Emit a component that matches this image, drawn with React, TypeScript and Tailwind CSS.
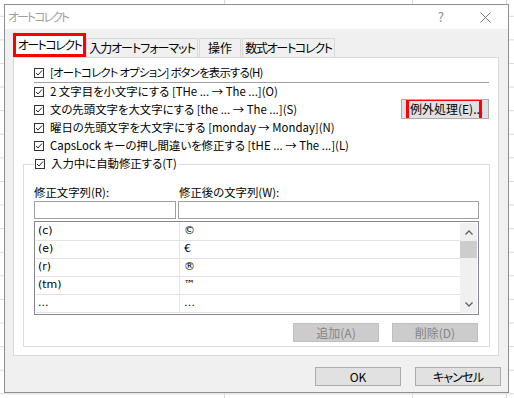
import React from "react";

const Check = () => (
  <span className="w-[10px] h-[10px] border border-[#333] bg-white flex items-center justify-center shrink-0">
    <svg width="8" height="8" viewBox="0 0 8 8">
      <polyline points="1,4 3,6 7,1.5" fill="none" stroke="#222" strokeWidth="1" />
    </svg>
  </span>
);

const Row = ({ text, cls = "" }: { text: string; cls?: string }) => (
  <div className="h-[18px] flex items-center gap-[6px]">
    <Check />
    <span className={"whitespace-nowrap " + cls}>{text}</span>
  </div>
);

const listRows: [string, string][] = [
  ["(c)", "©"],
  ["(e)", "€"],
  ["(r)", "®"],
  ["(tm)", "™"],
  ["...", "…"],
];

export default function App() {
  return (
    <div className="w-[514px] h-[398px] overflow-hidden bg-white bg-[linear-gradient(to_right,#dadada_1px,transparent_1px),linear-gradient(to_bottom,#dadada_1px,transparent_1px)] bg-[size:94px_23.6px] bg-[position:36px_15.8px] pl-[4px] pt-[4px] font-['Noto_Sans_CJK_JP',sans-serif] text-[11.4px] text-black [font-feature-settings:'palt']">
      <div className="w-[505px] h-[389px] border border-[#8f8f8f] bg-[#f0f0f0] flex flex-col">
        {/* title bar */}
        <div className="h-[24px] bg-white flex items-center pl-[3px] shrink-0">
          <span className="text-[#a0a0a0] text-[12px] tracking-[-2px]">オートコレクト</span>
          <span className="ml-auto mr-[36px] text-[#8a8a8a] text-[13px]">?</span>
          <svg width="11" height="11" viewBox="0 0 11 11" className="mr-[17px]">
            <path d="M0.5 0.5 L10.5 10.5 M10.5 0.5 L0.5 10.5" stroke="#777" strokeWidth="1" />
          </svg>
        </div>

        {/* tabs */}
        <div className="mt-[4px] ml-[8px] flex items-end h-[24px] whitespace-nowrap text-[12px]">
          <div className="w-[73px] h-[24px] border-[3px] border-[#ff0000] bg-white flex items-center justify-center tracking-[-1.5px]">
            オートコレクト
          </div>
          <div className="w-[112px] h-[19px] border border-b-0 border-[#d9d9d9] flex items-center justify-center tracking-[-1px]">
            入力オートフォーマット
          </div>
          <div className="ml-[1px] w-[42px] h-[19px] border border-b-0 border-[#d9d9d9] flex items-center justify-center">
            操作
          </div>
          <div className="ml-[1px] w-[93px] h-[19px] border border-b-0 border-[#d9d9d9] flex items-center justify-center tracking-[-1.3px]">
            数式オートコレクト
          </div>
        </div>

        {/* panel */}
        <div className="ml-[8px] w-[486px] h-[299px] border border-[#d9d9d9] bg-white flex flex-col shrink-0">
          <div className="mt-[6px] ml-[20px]">
            <Row text="[オートコレクト オプション] ボタンを表示する(H)" cls="tracking-[-0.8px]" />
          </div>
          <div className="ml-[20px] w-[455px] h-px bg-[#a0a0a0]" />
          <div className="flex">
            <div className="ml-[20px] flex flex-col">
              <Row text="2 文字目を小文字にする [THe ... → The ...](O)" />
              <Row text="文の先頭文字を大文字にする [the ... → The ...](S)" />
              <Row text="曜日の先頭文字を大文字にする [monday → Monday](N)" />
              <Row text="CapsLock キーの押し間違いを修正する [tHE ... → The ...](L)" />
            </div>
            <div className="ml-auto mr-[9px] mt-[16px] w-[88px] h-[20px] bg-[#e1e1e1] border border-[#adadad] relative flex items-center pl-[8px] overflow-hidden text-[12px]">
              <span className="whitespace-nowrap">例外処理(E)...</span>
              <div className="absolute left-[4px] top-[-2px] w-[76px] h-[23px] border-[3px] border-[#ff0000]" />
            </div>
          </div>

          <fieldset className="ml-[9px] w-[467px] border border-[#dcdcdc] px-[10px] pb-[4px]">
            <legend className="px-[1px]">
              <Row text="入力中に自動修正する(T)" />
            </legend>
            <div className="mt-[12px] h-[16px] flex items-center whitespace-nowrap">
              <span className="w-[145px]">修正文字列(R):</span>
              <span>修正後の文字列(W):</span>
            </div>
            <div className="flex gap-[2px] h-[18px]">
              <div className="w-[142px] border border-[#a0a0a0] bg-white" />
              <div className="w-[301px] border border-[#a0a0a0] bg-white" />
            </div>
            <div className="mt-[2px] w-[445px] h-[94px] border border-[#828790] flex p-[1px]">
              <div className="w-[424px] flex flex-col font-['DejaVu_Sans',sans-serif] text-[11px]">
                {listRows.map(([a, b], i) => (
                  <div key={i} className="h-[18px] flex border-b border-[#e3e3e3] shrink-0">
                    <div className="w-[144px] pl-[2px] flex items-center border-r border-[#e3e3e3]">{a}</div>
                    <div className="pl-[4px] flex items-center">{b}</div>
                  </div>
                ))}
              </div>
              <div className="w-[17px] bg-[#f0f0f0] flex flex-col">
                <div className="h-[18px] flex items-center justify-center">
                  <svg width="8" height="5" viewBox="0 0 8 5">
                    <polyline points="0.5,4.5 4,1 7.5,4.5" fill="none" stroke="#606060" strokeWidth="1.3" />
                  </svg>
                </div>
                <div className="h-[17px] bg-[#cdcdcd]" />
                <div className="mt-auto h-[18px] flex items-center justify-center">
                  <svg width="8" height="5" viewBox="0 0 8 5">
                    <polyline points="0.5,0.5 4,4 7.5,0.5" fill="none" stroke="#606060" strokeWidth="1.3" />
                  </svg>
                </div>
              </div>
            </div>
            <div className="mt-[8px] flex justify-end gap-[13px] pr-[1px] text-[12px]">
              <div className="w-[86px] h-[19px] bg-[#cccccc] border border-[#bfbfbf] flex items-center justify-center text-[#838383]">
                追加(A)
              </div>
              <div className="w-[86px] h-[19px] bg-[#cccccc] border border-[#bfbfbf] flex items-center justify-center text-[#838383]">
                削除(D)
              </div>
            </div>
          </fieldset>
        </div>

        {/* bottom buttons */}
        <div className="mt-[11px] flex justify-end gap-[14px] mr-[7px] text-[12px]">
          <div className="w-[86px] h-[19px] bg-[#e1e1e1] border border-[#adadad] flex items-center justify-center">
            OK
          </div>
          <div className="w-[86px] h-[19px] bg-[#e1e1e1] border border-[#adadad] flex items-center justify-center tracking-[-0.8px]">
            キャンセル
          </div>
        </div>
      </div>
    </div>
  );
}
